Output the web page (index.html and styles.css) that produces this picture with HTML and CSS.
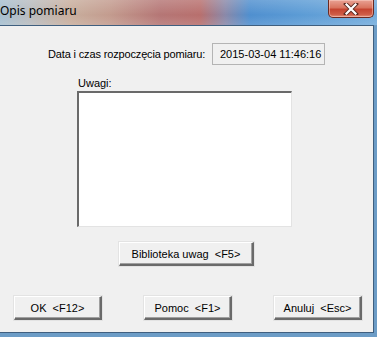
FILE: index.html
```html
<!DOCTYPE html>
<html lang="pl">
	<head>
		<meta charset="utf-8" />
		<title>Opis pomiaru</title>
		<link rel="stylesheet" href="styles.css">
	</head>
	<body>
		<div class="window">
			<div class="titlebar">
				<span class="title">Opis pomiaru</span>
				<button class="close" title="Zamknij">
					<svg width="16" height="12" viewBox="0 0 16 12">
						<path d="M3 1 L13 11 M13 1 L3 11" stroke="#5a2a22" stroke-width="4" stroke-linecap="square"/>
						<path d="M3.5 1.5 L12.5 10.5 M12.5 1.5 L3.5 10.5" stroke="#fff" stroke-width="2.2" stroke-linecap="square"/>
					</svg>
				</button>
			</div>
			<div class="frame">
				<div class="panel">
					<div class="row-date">
						<span class="label">Data i czas rozpoczęcia pomiaru:</span>
						<span class="datebox">2015-03-04 11:46:16</span>
					</div>
					<div class="notes">
						<label for="uwagi">Uwagi:</label>
						<textarea id="uwagi"></textarea>
					</div>
					<div class="row-lib">
						<button class="btn btn-lib">Biblioteka uwag &nbsp;&lt;F5&gt;</button>
					</div>
					<div class="row-actions">
						<button class="btn">OK &nbsp;&lt;F12&gt;</button>
						<button class="btn">Pomoc &nbsp;&lt;F1&gt;</button>
						<button class="btn">Anuluj &nbsp;&lt;Esc&gt;</button>
					</div>
				</div>
			</div>
		</div>
	</body>
</html>
```

FILE: styles.css
```css
html, body {
	margin: 0;
	padding: 0;
}
body {
	width: 377px;
	height: 337px;
	overflow: hidden;
	font-family: "Liberation Sans", Arial, sans-serif;
	font-size: 11px;
	color: #000;
}
.window {
	width: 377px;
	height: 337px;
	display: flex;
	flex-direction: column;
	background: #6c9cc6;
}
.titlebar {
	height: 25px;
	flex: none;
	display: flex;
	align-items: flex-start;
	justify-content: space-between;
	background:
		linear-gradient(180deg, rgba(255,255,255,0.18) 0%, rgba(255,255,255,0) 60%, rgba(255,255,255,0.12) 100%),
		linear-gradient(90deg, #a6bfd0 0px, #b9bcbf 30px, #c8ae9d 70px, #c39b8e 110px, #b57675 160px, #b86f6d 200px, #8a88a8 225px, #4f8fcf 250px, #5b9bd5 300px, #74acdc 377px);
}
.title {
	font-family: "Noto Sans", "Open Sans", sans-serif;
	font-size: 12px;
	line-height: 14px;
	padding: 4px 0 0 0;
	color: #000;
}
.close {
	width: 46px;
	height: 18px;
	margin-right: 3px;
	padding: 0;
	border: 1px solid #6b2a22;
	border-top: none;
	border-radius: 0 0 5px 5px;
	background: linear-gradient(180deg, #e9a294 0%, #d9745f 45%, #c54430 55%, #cf5c46 85%, #e2917c 100%);
	box-shadow: inset 0 0 0 1px rgba(255,220,210,0.45);
	display: flex;
	align-items: center;
	justify-content: center;
}
.frame {
	flex: 1;
	display: flex;
	padding: 0 3px 4px 0;
}
.panel {
	flex: 1;
	background: #f0f0f0;
	border: 1px solid #3f5f7f;
	border-left: none;
	display: flex;
	flex-direction: column;
	padding-top: 17px;
}
.row-date {
	display: flex;
	align-items: center;
	height: 22px;
	padding-left: 48px;
}
.label {
	width: 157px;
	text-align: right;
	white-space: nowrap;
	letter-spacing: -0.15px;
}
.datebox {
	margin-left: 7px;
	width: 113px;
	height: 22px;
	box-sizing: border-box;
	border: 1px solid #b4b4b4;
	display: flex;
	align-items: center;
	padding-left: 7px;
}
.notes {
	display: flex;
	flex-direction: column;
	margin-top: 11px;
	padding-left: 77px;
}
.notes label {
	padding-left: 1px;
	line-height: 14px;
	height: 15px;
}
.notes textarea {
	width: 215px;
	height: 136px;
	margin: 0;
	box-sizing: border-box;
	resize: none;
	background: #fff;
	border-style: solid;
	border-width: 2px 1px 1px 2px;
	border-color: #6a6a6a #e3e3e3 #e3e3e3 #6a6a6a;
	outline: none;
}
.row-lib {
	display: flex;
	padding-left: 119px;
	margin-top: 15px;
}
.btn {
	font-family: "Liberation Sans", Arial, sans-serif;
	font-size: 11px;
	color: #000;
	height: 24px;
	width: 88px;
	padding: 0;
	background: #f0f0f0;
	border-style: solid;
	border-width: 1px 2px 2px 1px;
	border-color: #ffffff #6a6a6a #6a6a6a #ffffff;
	box-shadow: inset -1px -1px 0 #a0a0a0, 0 0 0 1px #e3e3e3;
}
.btn-lib {
	width: 135px;
}
.row-actions {
	display: flex;
	gap: 42px;
	padding-left: 14px;
	margin-top: 30px;
}
```
